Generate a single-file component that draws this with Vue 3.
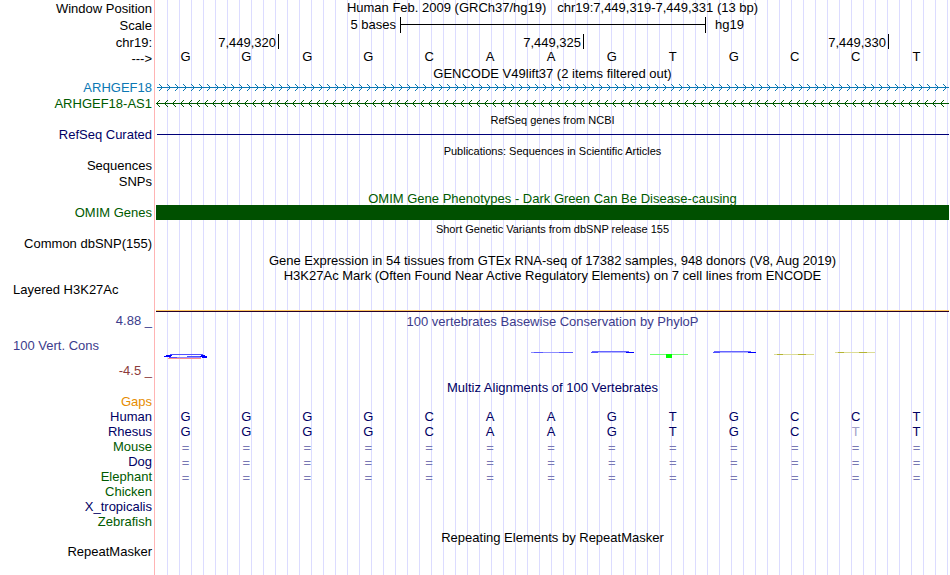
<script setup>
const bases = 'GGGGCAAGTGCCT'.split('')
const rhesus = 'GGGGCAAGTGCTT'.split('')
const unaligned = Array(13).fill('=')

const positions = [
  { text: '7,449,320', from: 1 },
  { text: '7,449,325', from: 6 },
  { text: '7,449,330', from: 11 },
]

const logos = [
  { col: 1, kind: 'tall' },
  { col: 7, kind: 'thin' },
  { col: 8, kind: 'arc' },
  { col: 9, kind: 'green' },
  { col: 10, kind: 'arc' },
  { col: 11, kind: 'low' },
  { col: 12, kind: 'high' },
]

const species = [
  { name: 'Gaps', tone: 'orange', cells: [] },
  { name: 'Human', tone: 'navy', cells: bases },
  { name: 'Rhesus', tone: 'navy', cells: rhesus },
  { name: 'Mouse', tone: 'green', cells: unaligned },
  { name: 'Dog', tone: 'navy', cells: unaligned },
  { name: 'Elephant', tone: 'green', cells: unaligned },
  { name: 'Chicken', tone: 'green', cells: [] },
  { name: 'X_tropicalis', tone: 'navy', cells: [] },
  { name: 'Zebrafish', tone: 'green', cells: [] },
]

const differs = (cell, i) => cell !== '=' && cell !== bases[i]
</script>

<template>
  <main class="browser">
    <section class="row ruler">
      <div class="label">Window Position</div>
      <h1 class="title position">Human Feb. 2009 (GRCh37/hg19) &nbsp; chr19:7,449,319-7,449,331 (13 bp)</h1>
    </section>
    <section class="row ruler">
      <div class="label">Scale</div>
      <div class="marks scale">
        <span class="scale-size">5 bases</span>
        <span class="scale-bar"></span>
        <span class="scale-db">hg19</span>
      </div>
    </section>
    <section class="row ruler">
      <div class="label">chr19:</div>
      <div class="marks">
        <span v-for="p in positions" :key="p.text" class="tick" :style="{ gridColumn: `${p.from} / span 2` }">{{ p.text }}</span>
      </div>
    </section>
    <section class="row sequence">
      <div class="label">---&gt;</div>
      <div class="bases">
        <span v-for="(b, i) in bases" :key="i">{{ b }}</span>
      </div>
    </section>

    <h2 class="heading snug">GENCODE V49lift37 (2 items filtered out)</h2>
    <section class="row">
      <div class="label blue">ARHGEF18</div>
      <svg class="strand blue forward" aria-hidden="true">
        <defs>
          <pattern id="forward" width="8" height="16" patternUnits="userSpaceOnUse">
            <path d="M2 4l3.5 3.5L2 11" fill="none" stroke="currentColor" />
          </pattern>
        </defs>
        <rect width="100%" height="16" fill="url(#forward)" />
        <rect y="7" width="100%" height="1" fill="currentColor" />
      </svg>
    </section>
    <section class="row">
      <div class="label green">ARHGEF18-AS1</div>
      <svg class="strand green" aria-hidden="true">
        <defs>
          <pattern id="reverse" width="8" height="16" patternUnits="userSpaceOnUse">
            <path d="M4 4L.5 7.5 4 11" fill="none" stroke="currentColor" />
          </pattern>
        </defs>
        <rect width="100%" height="16" fill="url(#reverse)" />
        <rect y="7" width="100%" height="1" fill="currentColor" />
      </svg>
    </section>

    <h2 class="heading small">RefSeq genes from NCBI</h2>
    <section class="row">
      <div class="label navy">RefSeq Curated</div>
      <div class="line"></div>
    </section>

    <h2 class="heading small">Publications: Sequences in Scientific Articles</h2>
    <section class="row"><div class="label">Sequences</div></section>
    <section class="row"><div class="label">SNPs</div></section>

    <h2 class="heading low green">OMIM Gene Phenotypes - Dark Green Can Be Disease-causing</h2>
    <section class="row">
      <div class="label green">OMIM Genes</div>
      <div class="block"></div>
    </section>

    <h2 class="heading small">Short Genetic Variants from dbSNP release 155</h2>
    <section class="row snp"><div class="label">Common dbSNP(155)</div></section>

    <h2 class="heading">Gene Expression in 54 tissues from GTEx RNA-seq of 17382 samples, 948 donors (V8, Aug 2019)</h2>
    <h2 class="heading">H3K27Ac Mark (Often Found Near Active Regulatory Elements) on 7 cell lines from ENCODE</h2>
    <section class="row layered">
      <div class="label inset">Layered H3K27Ac</div>
      <div class="signal"></div>
    </section>

    <section class="row conservation">
      <div class="axis">
        <span class="violet">4.88 _</span>
        <span class="violet name">100 Vert. Cons</span>
        <span class="maroon">-4.5 _</span>
      </div>
      <div class="phylop">
        <h2 class="title violet">100 vertebrates Basewise Conservation by PhyloP</h2>
        <div class="logos">
          <svg v-for="l in logos" :key="l.col" :style="{ gridColumn: l.col }" width="61" height="10" viewBox="0 0 61 10" aria-hidden="true">
            <g v-if="l.kind === 'tall'" fill="none">
              <path d="M13 8.5H46" stroke="#ff8c8c" />
              <path d="M15 4.5H48M14 7.5H22M32 6.5H48" stroke="#5050ff" />
              <path d="M22 7.5H46" stroke="#8c8cff" />
              <path d="M11 5.5H17M9 6.5H16M46 5.5H50M45 6.5H52M47 7.5H52" stroke="#0000ff" />
            </g>
            <g v-else-if="l.kind === 'thin'" fill="none">
              <path d="M10 2.5H52" stroke="#8c8cff" />
              <path d="M13 2.5H22M38 2.5H52" stroke="#5a5aff" />
            </g>
            <g v-else-if="l.kind === 'arc'" fill="none">
              <path d="M10 1.5H47" stroke="#6464ff" />
              <path d="M16 2.5H44" stroke="#b4b4ff" />
              <path d="M9 2.5H16" stroke="#5050ff" />
              <path d="M44 2.5H52" stroke="#0000ff" />
            </g>
            <g v-else-if="l.kind === 'green'">
              <path d="M7 4.5H45" stroke="#70ff70" />
              <path d="M23 4h6v4h-6z" fill="#00ff00" />
            </g>
            <g v-else fill="none">
              <path :d="l.kind === 'low' ? 'M9 4.5H49' : 'M9 2.5H49'" stroke="#dcdc96" />
              <path :d="l.kind === 'low' ? 'M12 4.5H18M33 4.5H41' : 'M12 2.5H18M33 2.5H41'" stroke="#b4b432" />
            </g>
          </svg>
        </div>
      </div>
    </section>

    <h2 class="heading snug navy">Multiz Alignments of 100 Vertebrates</h2>
    <section v-for="s in species" :key="s.name" class="row species">
      <div class="label" :class="s.tone">{{ s.name }}</div>
      <div class="bases navy">
        <span v-for="(c, i) in s.cells" :key="i" :class="{ gap: c === '=', differs: differs(c, i) }">{{ c }}</span>
      </div>
    </section>

    <h2 class="heading low">Repeating Elements by RepeatMasker</h2>
    <section class="row"><div class="label">RepeatMasker</div></section>
  </main>
</template>

<style>
body {
  margin: 0;
  background: #fff;
}
</style>

<style scoped>
.browser {
  box-sizing: border-box;
  min-height: 100vh;
  font: 13px/15px "Liberation Sans", Arial, sans-serif;
  color: #000;
  white-space: nowrap;
  background:
    linear-gradient(to right, #fff 154px, #ffb4b4 154px, #ffb4b4 155px, #fff 155px, #fff 156px, transparent 156px),
    linear-gradient(to right, #dcdcff 1px, transparent 1px) 11px 0 / 12px 100%;
}

.row {
  display: grid;
  grid-template-columns: 155px minmax(0, 1fr);
  height: 16px;
}

.label {
  padding-right: 3px;
  text-align: right;
}

.title,
.heading {
  margin: 0;
  font-size: 13px;
  font-weight: normal;
  text-align: center;
}

.heading {
  height: 15px;
  padding-left: 155px;
}

.heading.snug { height: 14px; }
.heading.low { line-height: 17px; }
.heading.small { font-size: 11px; line-height: 17px; }

.blue { color: #0c78b4; }
.green { color: #005a00; }
.navy { color: #000064; }
.orange { color: #e68c00; }
.violet { color: #3c3c8c; }
.maroon { color: #8c3c3c; }

.ruler,
.ruler .label {
  height: 17px;
  line-height: 17px;
}

.ruler .position { line-height: 15px; }

.sequence { height: 15px; }
.sequence .bases { line-height: 11px; }

.marks,
.bases,
.logos {
  display: grid;
  grid-template-columns: repeat(13, minmax(0, 1fr));
}

.marks { padding: 0 1px; }

.bases {
  padding-right: 3px;
  text-align: center;
}

.scale { line-height: 15px; }

.scale-size {
  grid-column: 3 / span 2;
  padding-right: 4px;
  text-align: right;
}

.scale-bar {
  grid-column: 5 / span 5;
  height: 16px;
  margin-right: -1px;
  border: solid #000;
  border-width: 0 1px;
  background: linear-gradient(#000, #000) 0 7px / 100% 1px no-repeat;
}

.scale-db {
  grid-column: 10;
  padding-left: 10px;
}

.tick {
  height: 15px;
  margin-right: -1px;
  padding-right: 2px;
  border-right: 1px solid #000;
  text-align: right;
  line-height: 17px;
}

.strand {
  display: block;
  width: 100%;
  height: 16px;
  padding: 0 1px;
  box-sizing: border-box;
}

.forward { padding-left: 2px; }

.line {
  height: 1px;
  margin: 7px 1px 0 2px;
  background: #000078;
}

.block {
  height: 15px;
  margin: 0 1px;
  background: #005000;
}

.snp { height: 17px; }

.layered {
  height: 29px;
  line-height: 14px;
}

.inset {
  padding-left: 13px;
  text-align: left;
}

.signal {
  align-self: end;
  height: 1px;
  margin: 0 1px;
  border-top: 1px solid #ffc864;
  background: #280028;
}

.conservation { height: 68px; }

.axis {
  display: flex;
  flex-direction: column;
  gap: 10px;
  padding: 1px 3px 0 0;
  text-align: right;
}

.name {
  padding-left: 13px;
  text-align: left;
}

.phylop .title { line-height: 19px; }

.logos {
  margin-top: 19px;
  padding-right: 2px;
}

.species { height: 15px; }
.gap { color: #7878b4; line-height: 17px; }
.differs { color: #a0a0c8; }
</style>
